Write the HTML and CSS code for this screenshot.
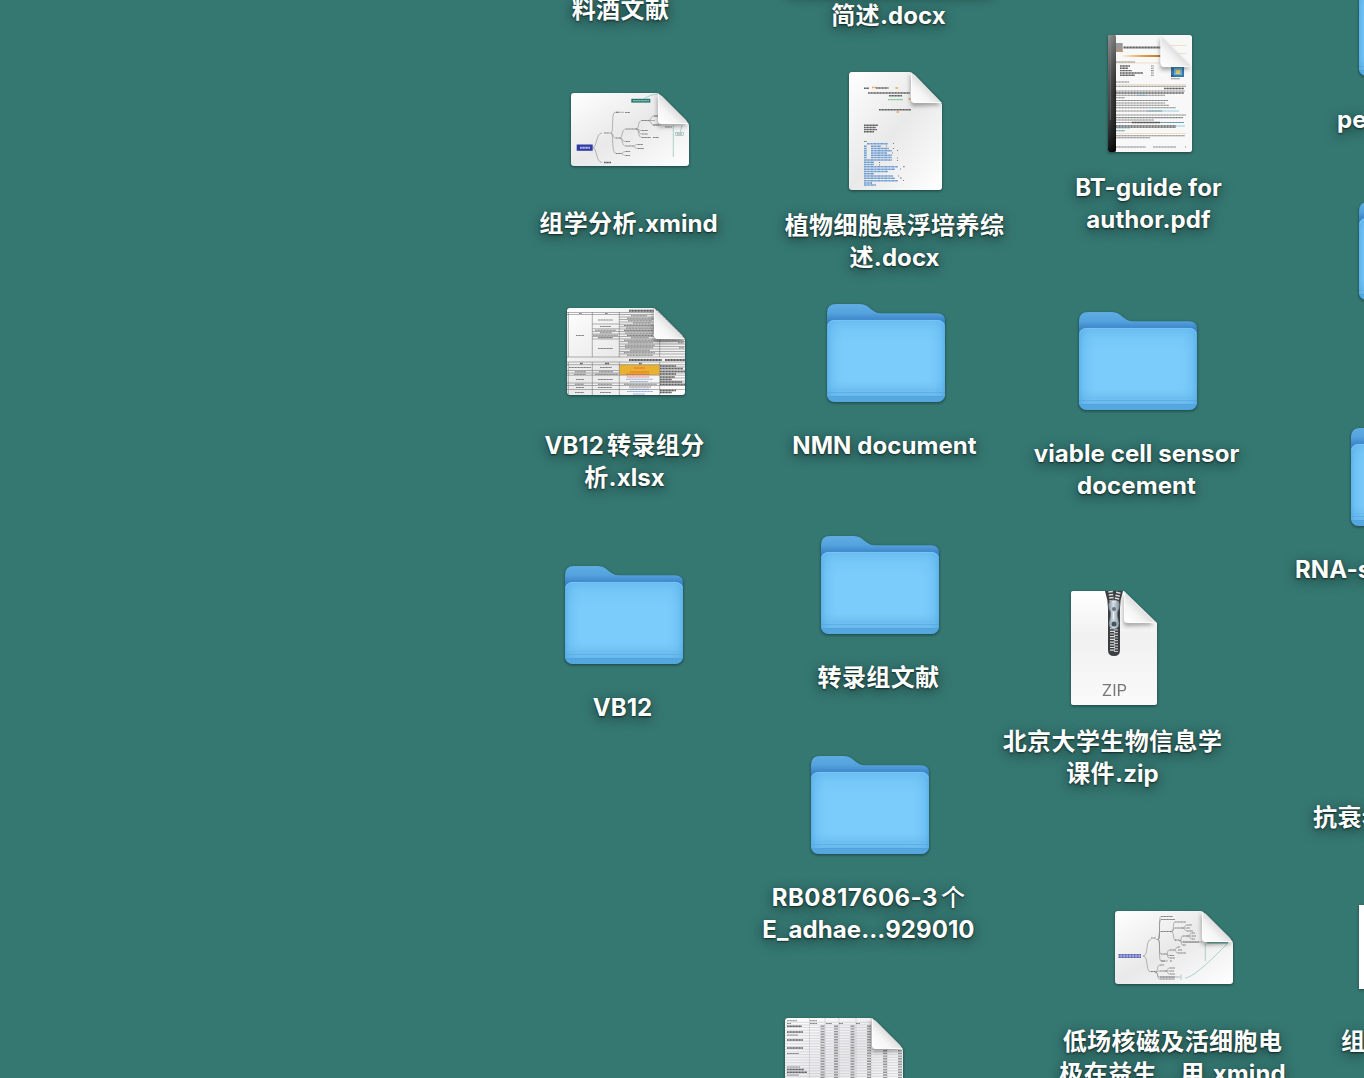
FILE: index.html
```html
<!DOCTYPE html>
<html lang="zh-CN">
<head>
<meta charset="utf-8">
<title>Desktop</title>
<link rel="stylesheet" href="styles.css">
</head>
<body>
<svg class="defs" aria-hidden="true">
  <defs>
    <linearGradient id="folder-back" x1="0" y1="0" x2="0" y2="1">
      <stop offset="0" stop-color="#5fade3"/><stop offset=".09" stop-color="#55a3de"/><stop offset=".17" stop-color="#3c84c8"/><stop offset="1" stop-color="#3c84c8"/>
    </linearGradient>
    <linearGradient id="folder-edge" x1="0" y1="0" x2="1" y2="0">
      <stop offset="0" stop-color="#4da4e2" stop-opacity=".65"/><stop offset=".04" stop-color="#5db2ec" stop-opacity=".4"/><stop offset=".16" stop-color="#7bccfa" stop-opacity="0"/>
      <stop offset=".84" stop-color="#7bccfa" stop-opacity="0"/><stop offset=".96" stop-color="#5db2ec" stop-opacity=".4"/><stop offset="1" stop-color="#4da4e2" stop-opacity=".65"/>
    </linearGradient>
    <linearGradient id="folder-front" x1="0" y1="0" x2="0" y2="1">
      <stop offset="0" stop-color="#69bcf0"/><stop offset=".14" stop-color="#76c8f8"/><stop offset=".3" stop-color="#7bccfa"/><stop offset=".8" stop-color="#7bccfa"/><stop offset="1" stop-color="#68b9ed"/>
    </linearGradient>
    <linearGradient id="paper" x1="0" y1="0" x2="1" y2="1">
      <stop offset="0" stop-color="#fff"/><stop offset=".28" stop-color="#f2f2f2"/><stop offset=".5" stop-color="#e9e9e9"/><stop offset=".8" stop-color="#f6f6f6"/><stop offset="1" stop-color="#fff"/>
    </linearGradient>
    <linearGradient id="zip-paper" x1="0" y1="0" x2="0" y2="1">
      <stop offset="0" stop-color="#fff"/><stop offset=".4" stop-color="#f1f1f1"/><stop offset="1" stop-color="#fafafa"/>
    </linearGradient>
    <linearGradient id="curl" gradientUnits="userSpaceOnUse" x1="1" y1="30" x2="16" y2="15">
      <stop offset="0" stop-color="#fff"/><stop offset=".6" stop-color="#f5f5f5"/><stop offset="1" stop-color="#dedede"/>
    </linearGradient>
    <linearGradient id="spine" x1="0" y1="0" x2="1" y2="0">
      <stop offset="0" stop-color="#555"/><stop offset=".45" stop-color="#333"/><stop offset="1" stop-color="#111"/>
    </linearGradient>
    <linearGradient id="spine-shine" x1="0" y1="0" x2="0" y2="1">
      <stop offset="0" stop-color="#bbb" stop-opacity=".6"/><stop offset=".5" stop-color="#555" stop-opacity=".3"/><stop offset="1" stop-color="#000" stop-opacity=".8"/>
    </linearGradient>
    <linearGradient id="gold" x1="0" y1="0" x2="1" y2="0">
      <stop offset="0" stop-color="#fff0d8"/><stop offset=".6" stop-color="#dc9635"/><stop offset="1" stop-color="#b8792c"/>
    </linearGradient>
    <linearGradient id="metal" x1="0" y1="0" x2="1" y2="0">
      <stop offset="0" stop-color="#8797a3"/><stop offset=".45" stop-color="#d3dde4"/><stop offset="1" stop-color="#8393a0"/>
    </linearGradient>
    <filter id="soft" x="-50%" y="-50%" width="200%" height="200%"><feGaussianBlur stdDeviation="2.3"/></filter>
    <symbol id="folder" viewBox="0 0 118 98">
      <path fill="url(#folder-back)" d="M0 9Q0 0 9 0H33C43 0 44 9.3 54 9.3H110Q118 9.3 118 17V90Q118 98 110 98H8Q0 98 0 90Z"/>
      <rect y="16" width="118" height="82" rx="8" fill="#55a7e0"/>
      <path fill="url(#folder-front)" d="M0 24Q0 16 8 16H110Q118 16 118 24V92H0Z"/>
      <path fill="url(#folder-edge)" d="M0 24Q0 16 8 16H110Q118 16 118 24V92H0Z"/>
      <path stroke="#4f9fd8" stroke-opacity=".5" d="M0 88.5H118M0 92.500H118"/>
      <path stroke="#62b2e7" stroke-opacity=".35" d="M0 85.5H118"/>
      <path fill="none" stroke="#8fd3fa" stroke-opacity=".5" stroke-width=".8" d="M1 22Q2 16.5 8 16.4H110Q116 16.5 117 22"/>
    </symbol>
    <symbol id="fold" viewBox="0 0 34 35" overflow="visible">
      <path class="fold-shade" d="M-1 2L0 33Q0 34 3 34L30 33Z"/>
      <path fill="url(#curl)" d="M0 0L31 31H4Q0 31 0 27Z"/>
      <path fill="none" stroke="#fff" stroke-width=".8" d="M.4 1V27Q.4 30.6 4 30.6H30"/>
    </symbol>
    <clipPath id="wide-clip"><path d="M3 0H86L91 3L115 27L118 32V70Q118 73 115 73H3Q0 73 0 70V3Q0 0 3 0Z"/></clipPath>
    <clipPath id="sheet-clip"><path d="M3 0H86L91 3L115 27L118 32V84Q118 87 115 87H3Q0 87 0 84V3Q0 0 3 0Z"/></clipPath>
    <clipPath id="doc-clip"><path d="M3 0H61L66 3L90 28L93 32V115Q93 118 90 118H3Q0 118 0 115V3Q0 0 3 0Z"/></clipPath>
  </defs>
</svg>

<main class="desktop">
  <div class="item wine"><p class="label">料酒文献</p></div>
  <div class="item brief"><i class="shade"></i><p class="label">简述<span class="latin">.docx</span></p></div>

  <div class="item omics">
    <div class="icon"><svg width="118" height="73" viewBox="0 0 118 73">
      <g clip-path="url(#wide-clip)">
        <rect width="118" height="73" fill="url(#paper)"/>
        <path class="branch" d="M22 54.7C26 54 25 40 31 40M22 54.7C26 55 25 69.5 31 69.5M38 40H40C43 40 40 19.3 44 19.3H53M40 40C43 40 41 45 45 45M40 40C43 40 40 60.5 45 60.5M49 45C52 45 50 36 55 36M49 45C52 45 50 48.5 55 48.5M49 45C52 45 50 53 55 53M65 36C69 36 66 27.5 71 27.5M65 36C69 36 67 37.5 71 37.5M65 36C69 36 67 41 71 41M65 36C69 36 66 44.5 71 44.5M77 27.5C81 27.5 79 23 83 23H88M77 27.5H84M77 27.5C81 27.5 79 32 83 32H90M61 53C65 53 63 51.5 67 51.5M61 53C65 53 63 55.5 67 55.5M49 60.5C53 60.5 51 58.5 55 58.5M49 60.5C53 60.5 51 62.5 55 62.5"/>
        <path class="scribble" d="M33 40H38M45 19.3H48M54 19.5H59M45 45H49M45 60.5H49M55 36H65M71 27.5H77M71 37.5H77M71 41H77M71 44.5H80M82 44.5H88M55 48.5H59M55 53H61M67 51.5H72M67 55.5H73M55 58.5H59M55 62.5H59M83 23H88M82 32H88M94 34H101"/>
        <path class="scribble heavy" d="M33 69.5H40"/>
        <rect x="5.7" y="51.5" width="16" height="6.3" fill="#303ba5"/><path class="scribble light bold-light" d="M9 54.7H19"/>
        <rect x="60.3" y="5.8" width="19" height="3.8" fill="#20786c"/><path class="scribble light" d="M62 7.7H78"/>
        <path class="teal" d="M73 5.5Q80 1 88 1M102.3 32V64M111 32L109.5 39"/><rect class="teal" x="104.7" y="39.5" width="7.7" height="3"/>
        <path class="scribble" d="M106 41H111"/>
      </g>
      <use href="#fold" x="87" y="0" width="34" height="35"/>
    </svg></div>
    <p class="label">组学分析<span class="latin">.xmind</span></p>
  </div>

  <div class="item plant">
    <div class="icon"><svg width="93" height="118" viewBox="0 0 93 118">
      <g clip-path="url(#doc-clip)">
        <rect width="93" height="118" fill="url(#paper)"/>
        <path class="scribble heavy" d="M15 16.2H20M27 16H39.5M19 21H61M40 23.8H53M30 37.7H62"/>
        <path class="scribble heavy orange" d="M23 15.5H27M46.5 16H49.5M59.5 27H62M47.5 40H50"/>
        <path class="scribble green" d="M39 27.6H54"/>
        <path class="scribble heavy" d="M15 53.3H29M15 55.5H27M15 57.6H28M15 59.7H25"/>
        <path class="scribble" d="M15 69.5H18M44 71.5H45M37 74H38M44 76.5H45M48 78.5H49M43 81H44M48 86H49M48 88.500H49M30 90.500H31M30 93H31M54 94.800H56M51 97H52M49 104H50M51 106H53M54 108.500H55M22 111H23"/>
        <path class="blue-line" d="M18 71.700H39M15 74.200H18M22 74.200H32M15 76.500H18M22 76.500H40M15 78.700H18M22 78.700H43M15 81H18M22 81H38M15 83.300H18M22 83.300H43M15 85.600H18M22 85.600H43M15 87.900H43M15 90.300H25M15 92.600H25M15 94.800H49M15 97.200H46M15 99.500H39M15 101.700H25M15 104H44M15 106.300H46M15 108.700H49M15 111H23M15 113H27"/>
      </g>
      <use href="#fold" x="62" y="0" width="34" height="35"/>
    </svg></div>
    <p class="label">植物细胞悬浮培养综<br>述<span class="latin">.docx</span></p>
  </div>

  <div class="item guide">
    <div class="icon"><svg width="84" height="117" viewBox="0 0 84 117">
      <rect width="84" height="117" rx="2.500" fill="#f8f8f8"/>
      <path fill="#999" d="M8 8H14.700V16H8Z"/><path stroke="#d89055" d="M8 16.500H15"/>
      <path class="scribble title" d="M15.500 12.500H54"/>
      <rect x="14" y="20" width="40" height="2" fill="url(#gold)"/>
      <path class="cream" d="M61 10.500H78M69 18.500H78M8 28H54M8 49.500H78M8 98.500H78"/>
      <path class="scribble" d="M8 27H27M8 95.800H17M8 47H21M8 62.700H17M43 31H46M43 33.300H46M43 35.600H46M43 38H46M43 40.300H46M63 43.700H72"/>
      <path class="scribble heavy" d="M12 31H22M12 33.300H20M12 35.600H24M12 38H35M12 40.300H27"/>
      <path class="scribble" d="M8 51.300H78M8 56H77M8 60.300H57M8 65.500H60M8 68H57M8 70.300H61M8 72.700H68M8 76H54M8 80H78M8 82.600H75M8 85H46M8 87.500H76M8 92.500H68M8 100.700H77M8 102.700H42M8 112H38M45 112H68M77 112H78"/>
      <path class="scribble heavy" d="M56 53.500H76M8 58H76M24 87.500H52M8 91H68"/>
      <path class="scribble sky" d="M39 76H71M54 87.500H76M68 91H77M8 93H22M29 60.300H38"/>
      <rect x="63" y="31" width="13" height="11" fill="#347aaa"/><rect x="66" y="33" width="8" height="7" fill="#6fafd0"/><rect x="68" y="35" width="4" height="4" fill="#dec568"/><path fill="#334f9a" d="M63 39L67 42H63Z"/>
      <rect width="8" height="117" rx="2" fill="url(#spine)"/><rect width="8" height="117" rx="2" fill="url(#spine-shine)"/><path stroke="#888" stroke-opacity=".6" stroke-width=".7" d="M2.500 1V85"/>
      <use href="#fold" x="52.500" y="1" width="34" height="35"/>
    </svg></div>
    <p class="label latin">BT-guide for<br>author.pdf</p>
  </div>

  <div class="item table">
    <div class="icon"><svg width="118" height="87" viewBox="0 0 118 87">
      <g clip-path="url(#sheet-clip)">
        <rect width="118" height="87" fill="url(#paper)"/>
        <rect x="52.300" y="56.700" width="40.400" height="10.300" fill="#e9b132"/>
        <path class="grid" d="M1.300 4V49M25.300 4V49M52.300 4V49M92.700 31V49M1.300 54V87M25.300 54V87M52.300 54V87M92.700 54V87M0 4.500H118M0 6.500H118M25.300 16H52.300M25.300 20.800H52.300M25.300 23.500H52.300M25.300 26H52.300M25.300 28.500H52.300M25.300 31H52.300M52.300 9H118M52.300 11.500H118M52.300 14H118M52.300 16.300H118M52.300 18.700H118M52.300 21H118M52.300 23.500H118M52.300 26H118M52.300 28.500H118M52.300 31H118M52.300 33.500H118M52.300 36H118M52.300 38.500H118M52.300 41H118M52.300 43.500H118M52.300 46H118M0 49H118M0 54H118M0 56.700H118M0 62.500H52M0 65H52M0 67.200H118M0 75H118M0 77.500H118M0 81.500H118M93 59H118M93 62H118M93 65H118M93 70H118M93 73H118"/>
        <path class="scribble title" d="M62 2.700H90M62 52H95M98 52H118"/>
        <path class="scribble" d="M12 5.500H15M38 5.500H41M9 27.500H17M31 12H46M33 18.500H44M28 22.200H49M33 24.800H45M26 27.300H51M31 29.600H46M31 40.500H46M64 7.700H80M60 10.200H88M61 12.700H85M66 15H84M57 17.500H88M59 20H88M57 22.400H88M58 25H89M60 27.400H86M64 29.800H82M57 32.300H117M61 34.700H86M58 37.200H88M58 39.700H86M63 42.300H83M57 44.700H88M60 47.300H86M111 34.700H117M112 39.700H117M2 59.500H24M33 59.500H45M8 63.700H19M32 63.700H46M7 66.200H19M28 66.200H51M9 71.500H17M31 71.500H46M8 76.300H17M31 76.300H45M9 79.500H17M31 79.500H45M8 84.500H17M33 84.500H44M57 76.300H90M62 79H84"/>
        <path class="scribble heavy" d="M13 55.500H16M38 55.500H42M72 55.500H75M93 58H109M93 60.500H116M93 63.500H118M93 66H109M93 69H108M93 71.500H105M93 74H115M93 76.500H118M93 82.500H109M93 84.500H105"/>
        <path class="scribble red" d="M67 60H78M63 64H82M59 66.300H83M60 69H82"/>
        <path class="scribble blue" d="M59 71.200H86M63 73.500H81M63 81.300H82M60 83.500H86M66 86H78"/>
      </g>
      <use href="#fold" x="87" y="0" width="34" height="35"/>
    </svg></div>
    <p class="label"><span class="latin">VB12</span><i class="thin"></i>转录组分<br>析<span class="latin">.xlsx</span></p>
  </div>

  <div class="item nmn"><div class="icon"><svg class="folder" width="118" height="98"><use href="#folder"/></svg></div><p class="label latin">NMN document</p></div>
  <div class="item viable"><div class="icon"><svg class="folder" width="118" height="98"><use href="#folder"/></svg></div><p class="label latin">viable cell sensor<br>docement</p></div>
  <div class="item vb"><div class="icon"><svg class="folder" width="118" height="98"><use href="#folder"/></svg></div><p class="label latin">VB12</p></div>
  <div class="item papers"><div class="icon"><svg class="folder" width="118" height="98"><use href="#folder"/></svg></div><p class="label">转录组文献</p></div>
  <div class="item rb"><div class="icon"><svg class="folder" width="118" height="98"><use href="#folder"/></svg></div><p class="label latin"><span class="digits-label">RB0817606-3</span><i class="thin"></i><span class="regular">个</span><br>E_adhae...929010</p></div>

  <div class="item archive">
    <div class="icon"><svg width="86" height="114" viewBox="0 0 86 114">
      <path fill="url(#zip-paper)" d="M2 0H53L86 32V112Q86 114 84 114H2Q0 114 0 112V2Q0 0 2 0Z"/>
      <path fill="#3c3e40" d="M34 0H52Q49 9 49 17V59Q49 65 43 65Q37 65 37 59V17Q37 9 34 0Z"/>
      <path stroke="#d9dddf" stroke-width="5" stroke-dasharray="1.200 1.500" fill="none" d="M41.500 37V61"/>
      <path stroke="#b9bfc2" stroke-width="4" stroke-dasharray="1.200 1.500" fill="none" d="M45 38.300V61"/>
      <path stroke="#d9dddf" stroke-width="4.500" stroke-dasharray="1.500 1.500" fill="none" d="M39.500 0L41 12M47.500 1L45 12"/>
      <path fill="url(#metal)" stroke="#62717b" stroke-width=".5" d="M37.500 14Q38 9 43 9Q48.500 9 48.500 14Q48.500 18 46.500 21Q46 25 48 32Q48 38 43 38Q38 38 38 32Q40 25 39.500 21Q37.500 18 37.500 14Z"/>
      <circle cx="43" cy="18" r="2" fill="#657480"/><circle cx="43" cy="33" r="2.500" fill="#46545e"/><path stroke="#eef4f7" d="M41 11Q43 10 45 11M42.500 21V28"/>
      <use href="#fold" x="53" y="1" width="34" height="35"/>
      <text class="zip" x="43.500" y="105" text-anchor="middle">ZIP</text>
    </svg></div>
    <p class="label">北京大学生物信息学<br>课件<span class="latin">.zip</span></p>
  </div>

  <div class="item field">
    <div class="icon"><svg width="118" height="73" viewBox="0 0 118 73">
      <g clip-path="url(#wide-clip)">
        <rect width="118" height="73" fill="url(#paper)"/>
        <path class="branch" d="M28 45C34 45 30 28.500 36 28.500M28 45C34 45 30 61 36 61M41 28.500H43C46 28.500 43 5.500 46 5.500M43 28.500C46 28.500 43 8.500 46 8.500M43 28.500C45 28.500 43 20.500 46 20.500M43 28.500C46 28.500 43 43 46 43M43 28.500C46 28.500 43 50 46 50H53M56 20.500C60 20.500 57 11 60 11M56 20.500C60 20.500 57 17 60 17M56 20.500C60 20.500 57 29.500 61 29.500M67 17C71 17 69 14 72 14M67 17H72M67 17C71 17 69 20 72 20M64 29.500C68 29.500 65 25 68 25M64 29.500C68 29.500 65 31 68 31H87M64 29.500C68 29.500 65 34 68 34M72 25C76 25 74 22 77 22M72 25H77M72 25C76 25 74 28 77 28M51 43C54 43 51 39 55 39M51 43C54 43 51 44.500 55 44.500M51 43C54 43 51 47 55 47M59 39C62 39 60 36 63 36M59 39C62 39 60 42 63 42M40 61C44 61 41 54 45 54M40 61C44 61 41 60 45 60M40 61C44 61 41 66 45 66H65M40 61C44 61 41 68 45 68M50 60C54 60 51 57 55 57M50 60H55M50 60C54 60 51 63 55 63"/>
        <path class="scribble" d="M46 5.500H58M46 8.500H60M60 11H71M46 20.500H56M60 17H67M72 14H77M72 17H75M72 20H78M68 25H72M77 22H80M77 25H81M77 28H80M60 29H64M68 31H84M68 34H71M36 27H41M46 43H51M46 50H50M55 50H57M55 39H59M55 44.500H59M55 47H60M63 36H65M63 39H67M63 42H71M36 60.500H40M45 54H49M45 60H50M55 57H60M55 60H59M55 63H60M45 66H60M45 68H60"/>
        <path class="scribble heavy indigo" d="M3.500 43.800H26M3.500 46.200H26"/>
        <path class="teal" d="M90.300 32V50M66 63.500V69M70 67Q79 67 113 32"/><path stroke="#5eada2" stroke-width="1.500" d="M92 31.700H113"/>
      </g>
      <use href="#fold" x="87" y="0" width="34" height="35"/>
    </svg></div>
    <p class="label">低场核磁及活细胞电<br>极在益生…用<span class="latin">.xmind</span></p>
  </div>

  <div class="item data">
    <div class="icon"><svg width="118" height="87" viewBox="0 0 118 87">
      <g clip-path="url(#sheet-clip)">
        <rect width="118" height="87" fill="url(#paper)"/>
        <path class="grid pale" d="M0 4.300H118M0 7H118M0 9.500H118M0 12.200H118M0 15H118M0 17.700H118M0 20.400H118M0 23.100H118M0 25.800H118M0 28.500H118M0 31.200H118M0 33.900H118M0 36.600H118M0 39.300H118M0 42H118M0 44.700H118M0 47.400H118M0 50.100H118M0 52.800H118M0 55.500H118M0 58.200H118M24.500 0V87M40 0V87M54 0V87M71 0V87M86 0V87M102 31V87"/>
        <path class="scribble" d="M2 2.700H12M25 2.700H32M2 5.500H6M25 5.500H32M41 5.500H47M54 5.500H58M71 5.500H75M2 17H13M2 35.500H14M2 49H15M2 57H14"/>
        <path class="scribble heavy" d="M2 8.300H17M2 14H18M2 22H18M2 30H18M2 51.500H19M2 54.300H22"/>
        <path class="digits" d="M37.500 7.500V60M51 7.500V60M67.500 7.500V60M84 7.500V60M100 32V60M115 32V60"/>
      </g>
      <use href="#fold" x="87" y="0" width="34" height="35"/>
    </svg></div>
  </div>

  <div class="item edge-a"><div class="icon"><svg class="folder" width="118" height="98"><use href="#folder"/></svg></div><p class="label latin">pe</p></div>
  <div class="item edge-b"><div class="icon"><svg class="folder" width="118" height="98"><use href="#folder"/></svg></div></div>
  <div class="item edge-c"><div class="icon"><svg class="folder" width="118" height="98"><use href="#folder"/></svg></div><p class="label latin">RNA-s</p></div>
  <div class="item edge-d"><p class="label">抗衰老</p></div>
  <div class="item edge-e"><div class="icon"><i class="picture"></i></div><p class="label">组</p></div>
</main>
</body>
</html>
```
FILE: styles.css
```css
* { box-sizing: border-box; }

body {
  margin: 0;
  background: #357771;
  overflow: hidden;
}

.defs { position: absolute; width: 0; height: 0; }

.desktop {
  position: relative;
  width: 1364px;
  height: 1078px;
  overflow: hidden;
}

/* Icons are free-floating; left is the icon centre, top the icon box. */
.item {
  position: absolute;
  width: 256px;
  margin-left: -128px;
  display: flex;
  flex-direction: column;
  align-items: center;
  gap: 18px;
}

.icon {
  height: 120px;
  display: flex;
  align-items: center;
  justify-content: center;
}

.icon svg {
  display: block;
  margin-top: -2px;
  overflow: visible;
  filter: drop-shadow(0 1px 1.5px rgba(0, 0, 0, .45));
}

.icon svg.folder { margin-top: 2px; }
.archive .icon svg { margin-top: 0; }
.plant .icon svg, .guide .icon svg { margin-right: 1px; }

.label {
  margin: 0 0 0 -3px;
  color: #fff;
  font: 600 24px/32px Inter, "Noto Sans CJK SC", sans-serif;
  letter-spacing: .4px;
  text-align: center;
  white-space: nowrap;
  text-shadow: 0 1px 2px rgba(0, 0, 0, .6), 0 3px 12px rgba(0, 0, 0, .5);
}

.latin { font-weight: 700; letter-spacing: .08px; }
.digits-label { letter-spacing: .45px; }
.regular { font-weight: 500; }
.thin { display: inline-block; width: 3px; }

.wine { left: 622px; top: -6px; }
.brief { left: 890px; top: 0; }
.omics { left: 630px; top: 70px; }
.plant { left: 896px; top: 72px; }
.guide { left: 1150px; top: 34px; }
.table { left: 626px; top: 292px; }
.nmn { left: 886px; top: 292px; }
.viable { left: 1138px; top: 300px; }
.vb { left: 624px; top: 554px; }
.papers { left: 880px; top: 524px; }
.rb { left: 870px; top: 744px; }
.archive { left: 1114px; top: 588px; }
.field { left: 1174px; top: 888px; }
.data { left: 844px; top: 1002px; }
.edge-a { left: 1418px; top: -34px; }
.edge-b { left: 1418px; top: 190px; }
.edge-c { left: 1410px; top: 416px; }
.edge-d { left: 1441px; top: 802px; }
.edge-e { left: 1417px; top: 888px; }

.edge-a .label, .edge-c .label, .edge-d .label, .edge-e .label {
  align-self: flex-start;
  margin-left: 0;
}
.edge-a .label { padding-left: 47px; }
.edge-c .label { padding-left: 13px; }
.edge-e .label { padding-left: 52px; }

.shade {
  position: absolute;
  top: -28px;
  width: 210px;
  height: 22px;
  border-radius: 10px;
  box-shadow: 0 3px 12px rgba(0, 0, 0, .45);
}

.picture {
  width: 116px;
  height: 84px;
  margin-top: -2px;
  background: #fff;
  box-shadow: 0 1px 3px rgba(0, 0, 0, .4);
}

/* Miniature document content */
.branch { fill: none; stroke: #808080; stroke-width: .55; }
.scribble {
  fill: none;
  stroke: #444;
  stroke-width: 1.1;
  stroke-dasharray: 1.7 .2 .8 .3;
  stroke-opacity: .65;
}
.heavy { stroke-width: 1.4; stroke-opacity: .85; }
.title { stroke-width: 2; stroke-opacity: .85; }
.light { stroke: #fff; }
.bold-light { stroke-width: 2; }
.orange { stroke: #dfa02c; }
.green { stroke: #35b65c; }
.sky { stroke: #43a7c9; }
.red { stroke: #e34224; }
.blue { stroke: #628aca; }
.indigo { stroke: #3d46ad; stroke-width: 1.8; }
.teal { fill: none; stroke: #79b8ad; stroke-width: .6; }
.cream { stroke: #ead2a5; stroke-width: .6; }
.blue-line {
  fill: none;
  stroke: #4f88cb;
  stroke-width: 1.5;
  stroke-dasharray: 2 .3 1 .2;
  stroke-opacity: .8;
}
.grid { fill: none; stroke: #666; stroke-width: .5; }
.grid.pale { stroke: #b8b8c4; }
.digits {
  stroke: #666;
  stroke-width: 4;
  stroke-dasharray: 1.4 1.3;
  stroke-opacity: .65;
}
.fold-shade { fill: #000; fill-opacity: .35; filter: url(#soft); }

.zip {
  font: 400 16.5px Inter, sans-serif;
  fill: #777;
}
```
